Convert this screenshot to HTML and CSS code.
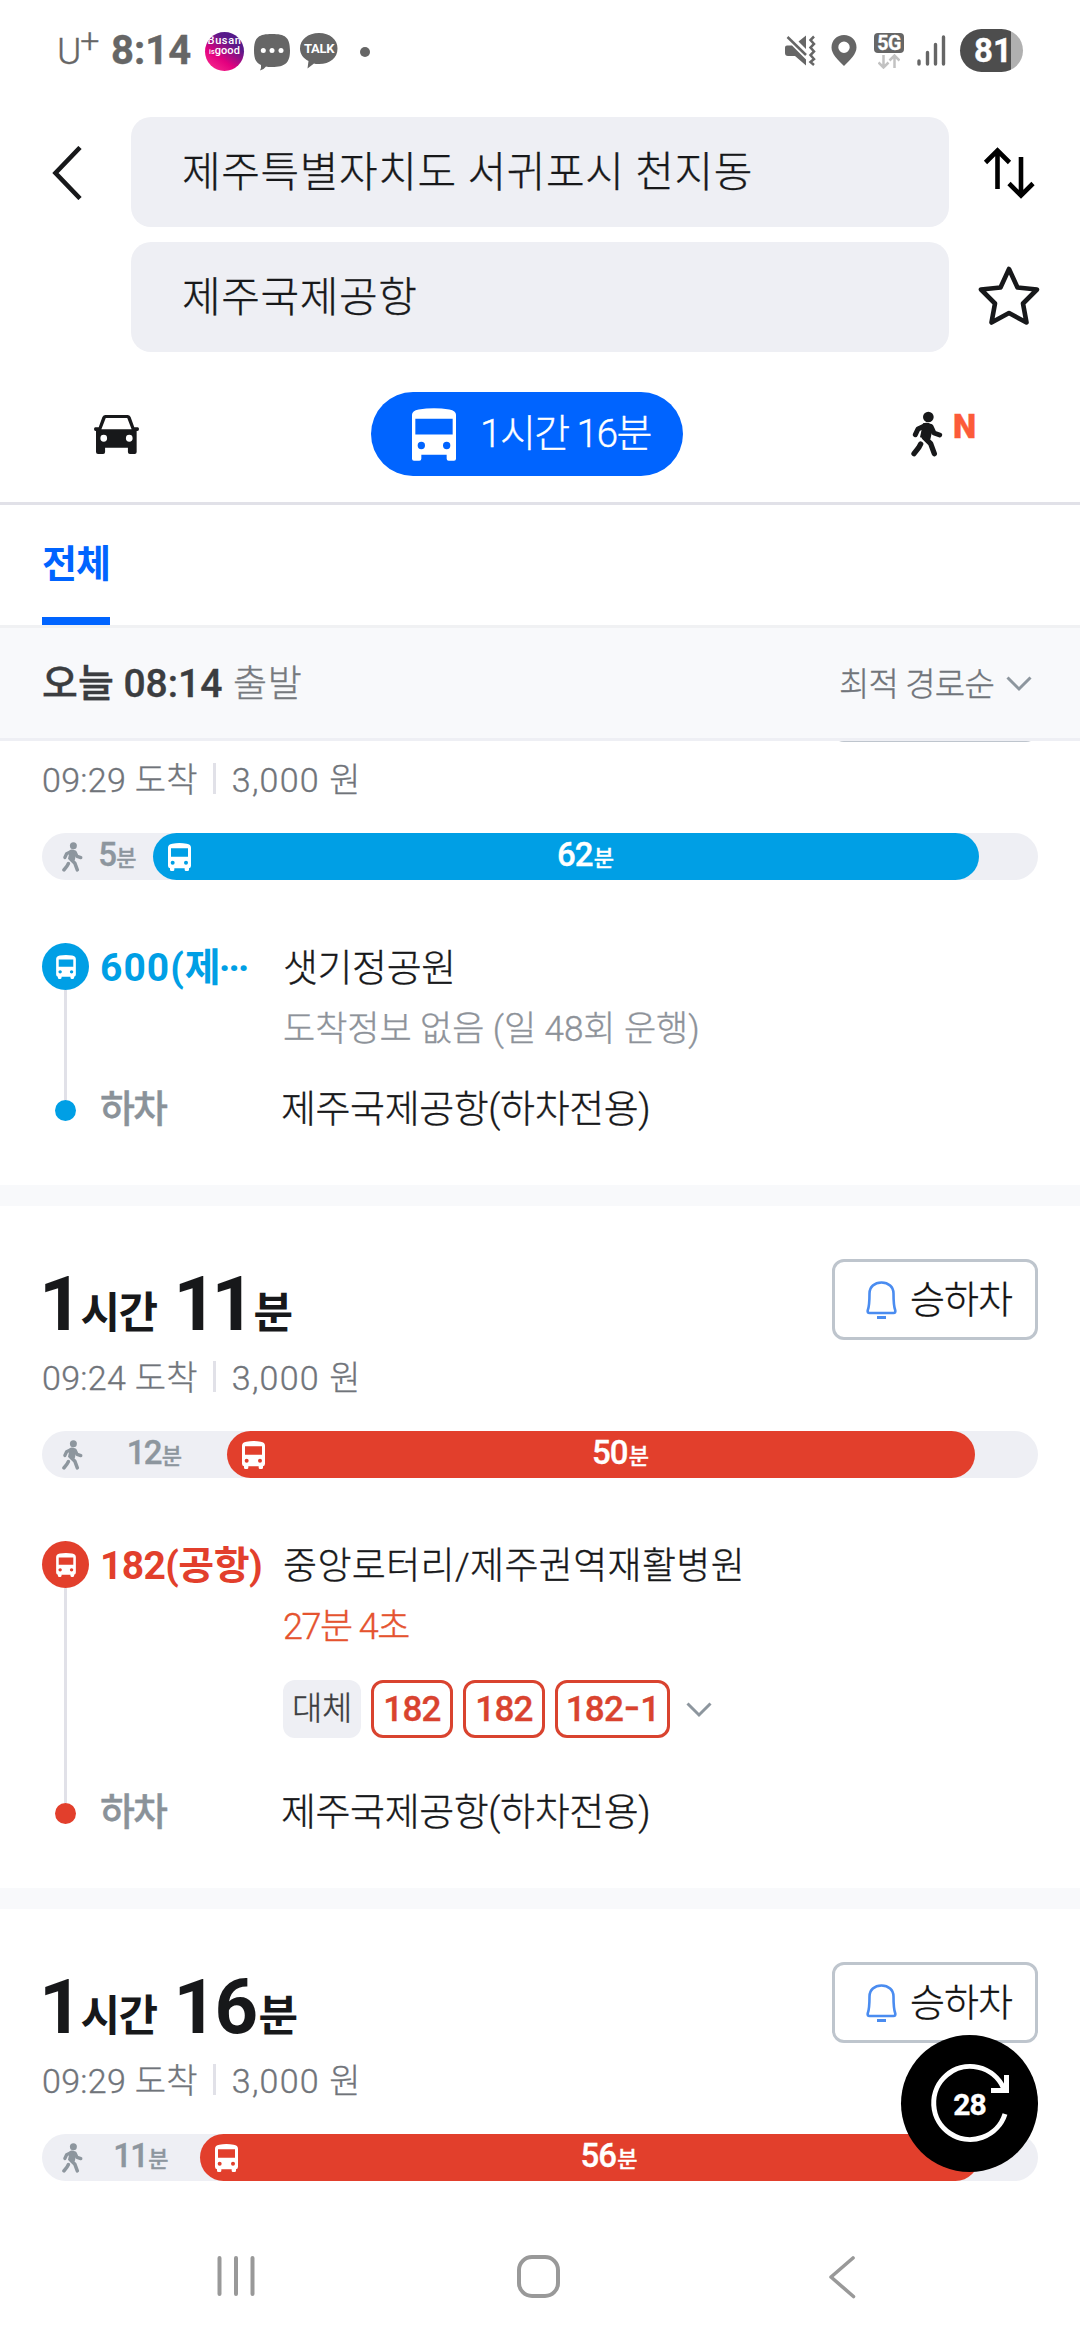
FILE: index.html
```html
<!DOCTYPE html>
<html lang="ko">
<head>
<meta charset="utf-8">
<title>길찾기</title>
<link rel="stylesheet" href="styles.css">
</head>
<body>
<svg class="defs" width="0" height="0">
  <symbol id="walk" viewBox="0 0 96 136">
    <circle cx="52" cy="17" r="16"/>
    <path d="M36 36Q48 31 60 38Q67 43 65 54L58 84L27 78Z"/>
    <path d="M42 43L21 53L13 70M60 46L69 65L86 71" fill="none" stroke="currentColor" stroke-width="15" stroke-linecap="round" stroke-linejoin="round"/>
    <path d="M40 78L59 97L70 127M29 98L23 109L9 127" fill="none" stroke="currentColor" stroke-width="16" stroke-linecap="round" stroke-linejoin="round"/>
  </symbol>
  <symbol id="bus" viewBox="0 0 69 84">
    <path fill-rule="evenodd" d="M0 14Q0 4 13 2Q34 -2 56 2Q69 4 69 14V68Q69 75 63 76V80Q63 84 59 84H54Q50 84 50 80V76H19V80Q19 84 15 84H10Q6 84 6 80V76Q0 75 0 68ZM9 16V41H60V16ZM8 59a6 6 0 1 0 12 0a6 6 0 1 0-12 0M48 59a6 6 0 1 0 12 0a6 6 0 1 0-12 0"/>
  </symbol>
  <symbol id="bell" viewBox="0 0 31 38">
    <path d="M15.500 1.500C8.500 1.500 3.500 6 3.500 12.500C3.500 21 3.500 25 1.700 29.500Q1.300 32 3.500 32H27.500Q29.700 32 29.300 29.500C27.500 25 27.500 21 27.500 12.500C27.500 6 22.500 1.500 15.500 1.500Z" fill="none" stroke="currentColor" stroke-width="2.600"/>
    <path d="M11 35h9v3h-9z"/>
  </symbol>
</svg>

<div class="phone">
  <header class="status">
    <span class="carrier">U<span class="plus">+</span></span>
    <span class="clock">8:14</span>
    <span class="busan"><span>Busan</span><span><small>is</small>good</span></span>
    <svg class="chat" width="36" height="38" viewBox="0 0 36 38" fill="#666"><path d="M18 1C31 1 36 4 36 17.500C36 30 31 34 18 34C15 34 13.500 34 12 33.500Q10 36.500 6 37.500Q7.500 35 7 32C1.500 29.500 0 25 0 17.500C0 4 5 1 18 1Z"/><g fill="#fff"><circle cx="9.300" cy="17.500" r="2.500"/><circle cx="18" cy="17.500" r="2.500"/><circle cx="27" cy="17.500" r="2.500"/></g></svg>
    <span class="talk"><svg width="38" height="36" viewBox="0 0 38 36" fill="#666"><path d="M19 0C30 0 37.500 6.500 37.500 15.500C37.500 25 30 31 19 31Q15 31 14 30.500L7.500 35.500L8.500 28C3.500 25.500 0 21 0 15.500C0 6.500 8 0 19 0Z"/></svg><span class="talk-text">TALK</span></span>
    <span class="more"></span>
    <span class="status-right">
      <svg class="mute" width="31" height="31" viewBox="0 0 31 31" fill="#666"><path d="M0 12.500Q0 10.500 2 10.500H7L21 24.500V30.500L10 21H3Q0 21 0 18ZM13.500 6.500L21 .500V14Z"/><path d="M2.500 2L21 20" stroke="#666" stroke-width="2.500"/><path class="wave" d="M29 1.500L25.500 5L29 9L25.500 12.500L29 16.500L25.500 20L29 24L25.500 27L29 30" fill="none" stroke="#666" stroke-width="2.500"/></svg>
      <svg class="pin" width="26" height="31" viewBox="0 0 26 31" fill="#666"><path fill-rule="evenodd" d="M13 0C20 0 25.500 5 25.500 12.500C25.500 19 19 25 13 31C7 25 .500 19 .500 12.500C.500 5 6 0 13 0ZM13 6.500a5.700 5.700 0 1 0 0 11.400a5.700 5.700 0 1 0 0-11.400"/></svg>
      <span class="net"><span class="net-tag">5G</span><svg width="22" height="15" viewBox="0 0 22 15" fill="none" stroke="#c2c2c2" stroke-width="2.500"><path d="M5.500 1V13M.500 8.500L5.500 13.500L10.500 8.500M16.500 14V2M11.500 6.500L16.500 1.500L21.500 6.500"/></svg></span>
      <svg class="signal" width="29" height="31" viewBox="0 0 29 31" stroke="#666" stroke-width="3.400" stroke-linecap="round"><path d="M2 26V29M10.500 17.500V29M18.500 9.500V29M26.500 2V29"/></svg>
      <span class="battery">81</span>
    </span>
  </header>

  <section class="search">
    <svg class="back" width="32" height="54" viewBox="0 0 32 54" fill="none" stroke="#17181a" stroke-width="4.600"><path d="M28 1.500L3.500 27L28 52.500"/></svg>
    <div class="field">제주특별자치도 서귀포시 천지동</div>
    <svg class="side" width="52" height="52" viewBox="0 0 52 52" fill="none" stroke="#000" stroke-width="4.600"><path d="M14.500 42V4M2.500 15.500L14.500 3.500L26.500 15.500M38 10V48M26 36.500L38 48.500L50 36.500"/></svg>
    <span></span>
    <div class="field">제주국제공항</div>
    <svg class="side star" width="62" height="64" viewBox="0 0 62 64" fill="none" stroke="#17181a" stroke-width="4.600" stroke-linejoin="round"><path d="M31 5L39.500 23.500L59 25.500L45 39.500L48.500 58.500L31 49L13.500 58.500L17 39.500L3 25.500L22.500 23.500Z"/></svg>
  </section>

  <nav class="modes">
    <svg width="45" height="39" viewBox="0 0 134 114" preserveAspectRatio="none" fill="#17181a"><path fill-rule="evenodd" d="M34 0H100Q106 0 109 6L120 36H130Q134 36 134 41Q134 47 129 47H127V108Q127 114 121 114H107Q101 114 101 108V96H33V108Q33 114 27 114H12Q6 114 6 108V47H5Q0 47 0 41Q0 36 4 36H14L25 6Q28 0 34 0ZM35 9L22 42H112L99 9ZM19 68a10 10 0 1 0 20 0a10 10 0 1 0-20 0M95 68a10 10 0 1 0 20 0a10 10 0 1 0-20 0"/></svg>
    <div class="pill">
      <svg width="44" height="53" viewBox="0 0 132 158" fill="#fff"><path fill-rule="evenodd" d="M0 20Q0 8 20 4Q66-4 112 4Q132 8 132 20V152Q132 158 126 158H110Q104 158 104 152V140H28V152Q28 158 22 158H6Q0 158 0 152ZM10 32V79H122V32ZM17 112a11 11 0 1 0 22 0a11 11 0 1 0-22 0M93 112a11 11 0 1 0 22 0a11 11 0 1 0-22 0"/></svg>
      <span>1시간 16분</span>
    </div>
    <div class="on-foot"><svg width="32" height="46"><use href="#walk"/></svg><span>N</span></div>
  </nav>

  <div class="tabs"><span class="tab">전체</span></div>

  <div class="depart">
    <span class="when">오늘 08:14 <span>출발</span></span>
    <span class="sort">최적 경로순<svg width="26" height="16" viewBox="0 0 26 16" fill="none" stroke="#8d969e" stroke-width="3"><path d="M1.500 1.500L13 13L24.500 1.500"/></svg></span>
  </div>

  <main class="list">
    <article class="card first blue">
      <div class="head"><span></span><span class="alarm"></span></div>
      <div class="meta"><span>09:29 도착</span><i></i><span class="fare">3,000 원</span></div>
      <div class="bar">
        <div class="foot" style="width:111px"><svg width="21" height="30"><use href="#walk"/></svg><span>5<small>분</small></span></div>
        <div class="ride" style="width:826px"><svg width="23" height="28"><use href="#bus"/></svg><span>62<small>분</small></span></div>
      </div>
      <div class="leg">
        <div class="rail"><span class="disc"><svg width="20" height="24"><use href="#bus"/></svg></span><span class="line"></span><span class="dot"></span></div>
        <div class="stops">
          <div class="row on"><b class="route wide">600(제<span class="dots">···</span></b><span>샛기정공원</span></div>
          <div class="arrive none">도착정보 없음 (일 48회 운행)</div>
          <div class="row off"><b>하차</b><span>제주국제공항(하차전용)</span></div>
        </div>
      </div>
    </article>

    <article class="card red">
      <div class="head">
        <h2><span>1</span><small>시간</small><span class="mins ones">11</span><small>분</small></h2>
        <span class="alarm"><svg width="31" height="38"><use href="#bell"/></svg>승하차</span>
      </div>
      <div class="meta"><span>09:24 도착</span><i></i><span class="fare">3,000 원</span></div>
      <div class="bar">
        <div class="foot" style="width:185px"><svg width="21" height="30"><use href="#walk"/></svg><span>12<small>분</small></span></div>
        <div class="ride" style="width:748px"><svg width="23" height="28"><use href="#bus"/></svg><span>50<small>분</small></span></div>
      </div>
      <div class="leg">
        <div class="rail"><span class="disc"><svg width="20" height="24"><use href="#bus"/></svg></span><span class="line"></span><span class="dot"></span></div>
        <div class="stops">
          <div class="row on"><b class="route">182(공항)</b><span class="wide-stop">중앙로터리/제주권역재활병원</span></div>
          <div class="arrive">27분 4초</div>
          <div class="chips"><span class="alt">대체</span><span class="chip">182</span><span class="chip">182</span><span class="chip long">182<em>-</em>1</span><svg width="26" height="16" viewBox="0 0 26 16" fill="none" stroke="#8d969e" stroke-width="3"><path d="M1.500 1.500L13 13L24.500 1.500"/></svg></div>
          <div class="row off"><b>하차</b><span>제주국제공항(하차전용)</span></div>
        </div>
      </div>
    </article>

    <article class="card red">
      <div class="head">
        <h2><span>1</span><small>시간</small><span class="mins">16</span><small>분</small></h2>
        <span class="alarm"><svg width="31" height="38"><use href="#bell"/></svg>승하차</span>
      </div>
      <div class="meta"><span>09:29 도착</span><i></i><span class="fare">3,000 원</span></div>
      <div class="bar">
        <div class="foot" style="width:158px"><svg width="21" height="30"><use href="#walk"/></svg><span>11<small>분</small></span></div>
        <div class="ride" style="width:779px"><svg width="23" height="28"><use href="#bus"/></svg><span>56<small>분</small></span></div>
      </div>
    </article>
  </main>

  <div class="refresh">
    <svg width="137" height="137" viewBox="0 0 137 137" fill="none" stroke="#fff" stroke-width="5"><path d="M104 79A36.500 36.500 0 1 1 102.500 53M105.500 40V55.500H90"/></svg>
    <span>28</span>
  </div>

  <footer class="navbar">
    <svg width="39" height="42" viewBox="0 0 39 42" stroke="#999" stroke-width="4" stroke-linecap="round"><path d="M2.500 3V39M19 3V39M35.500 3V39"/></svg>
    <svg width="43" height="43" viewBox="0 0 43 43" fill="none" stroke="#999" stroke-width="4"><rect x="2" y="2" width="39" height="39" rx="13"/></svg>
    <svg width="28" height="44" viewBox="0 0 28 44" fill="none" stroke="#999" stroke-width="3.600" stroke-linecap="round" stroke-linejoin="round"><path d="M25 3L3 22L25.500 41.500"/></svg>
  </footer>
</div>
</body>
</html>
```

FILE: styles.css
```css
* { box-sizing: border-box; }
body { margin: 0; background: #fff; font-family: Roboto, "Noto Sans CJK KR", sans-serif; font-weight: 300; color: #17181a; line-height: 1; -webkit-text-stroke: .35px currentColor; }
svg { display: block; flex: none; fill: currentColor; }
svg[fill="none"] { fill: none; }
.defs { position: absolute; }
small, em, b, h2, i { font: inherit; font-style: normal; margin: 0; }
.phone { position: relative; width: 1080px; height: 2340px; overflow: hidden; display: flex; flex-direction: column; white-space: nowrap; }

/* status bar */
.status { height: 101px; margin-bottom: 16px; padding: 0 57px 0 57px; display: flex; align-items: center; color: #666; flex: none; }
.status svg:not([fill="none"]) { fill: #666; }
.carrier { width: 54px; font-size: 37px; line-height: 44px; padding-top: 3px; display: flex; }
.plus { font-size: 34px; line-height: 20px; margin-left: -1px; }
.clock { font-size: 40px; font-weight: 700; width: 94px; line-height: 40px; }
.busan { width: 39px; height: 39px; border-radius: 50%; background: linear-gradient(35deg, #f5268c 10%, #e3007f 35%, #5b1a8a 70%, #4a1a8c); color: #fff; overflow: hidden; display: flex; flex-direction: column; align-items: center; font-size: 11px; line-height: 10px; font-weight: 500; padding-top: 4px; margin-top: 2px; -webkit-text-stroke: 0; }
.busan span { letter-spacing: .6px; }
.busan span + span { letter-spacing: .1px; }
.busan small { font-size: 7px; }
.chat { margin: 2px 0 0 10px; }
.talk { position: relative; margin-left: 10px; }
.talk-text { position: absolute; inset: 10px 0 auto; text-align: center; font-size: 13px; line-height: 12px; font-weight: 700; color: #fff; letter-spacing: -.3px; -webkit-text-stroke: 0; }
.more { width: 10px; height: 10px; border-radius: 50%; background: #666; margin: 3px 0 0 22px; }
.status-right { margin-left: auto; display: flex; align-items: center; }
.pin { margin-left: 15px; }
.net { margin-left: 17px; display: flex; flex-direction: column; align-items: center; gap: 1px; }
.net-tag { width: 30px; height: 20px; border-radius: 4px; background: #666; color: #fff; font-size: 19.5px; line-height: 21px; font-weight: 700; text-align: center; letter-spacing: -.5px; }
.signal { margin-left: 13px; }
.battery { margin-left: 14px; width: 63px; height: 43px; border-radius: 22px; background: linear-gradient(90deg, #4d4d4d 51px, #b0b0b0 51px); color: #fff; font-size: 33px; font-weight: 700; line-height: 43px; padding-left: 14px; }

/* origin / destination */
.search { display: grid; grid-template-columns: 131px 818px 131px; grid-template-rows: 110px 110px; row-gap: 15px; align-items: center; }
.back { margin: 2px 0 0 52px; }
.field { height: 110px; border-radius: 20px; background: #eeeff4; padding: 1px 0 0 51px; font-size: 42px; line-height: 110px; letter-spacing: .6px; }
.side { margin: 2px 0 0 34px; }
.star { margin: -2px 0 0 29px; }

/* travel modes */
.modes { display: grid; grid-template-columns: 277px 540px auto; align-items: center; padding: 40px 0 26px 94px; height: 153px; border-bottom: 3px solid #e1e1e8; flex: none; }
.pill { width: 312px; height: 84px; border-radius: 42px; background: #0064ff; color: #fff; display: flex; align-items: center; padding-left: 41px; gap: 24px; font-size: 39px; letter-spacing: -1.6px; }
.pill svg { fill: #fff; }
.on-foot { display: flex; align-items: flex-start; gap: 10px; }
.on-foot span { font-size: 33px; line-height: 32px; font-weight: 900; color: #fc5b39; }

.tabs { height: 123px; padding-left: 42px; border-bottom: 3px solid #f0f1f3; flex: none; }
.tab { display: block; width: 68px; height: 120px; border-bottom: 8px solid #0064ff; color: #0064ff; font-size: 38px; line-height: 118px; font-weight: 700; letter-spacing: -1px; -webkit-text-stroke: 0; }

.depart { height: 113px; padding: 2px 48px 0 42px; display: flex; align-items: center; justify-content: space-between; background: #f8f9fb; border-bottom: 3px solid #eeeff4; flex: none; }
.when { font-size: 39px; font-weight: 500; color: #3b3d40; }
.when span { font-size: 37px; font-weight: 300; color: #76797e; letter-spacing: .5px; margin-left: 1px; }
.sort { display: flex; align-items: center; gap: 12px; font-size: 33px; letter-spacing: -.8px; color: #70747a; }

/* routes */
.list { height: 1473px; overflow: hidden; flex: none; }
.card { padding: 53px 42px 52px; border-bottom: 21px solid #f8f9fb; }
.card.first { margin-top: -133px; }
.blue { --line: #009fe5; }
.red { --line: #e23f2c; }
.head { height: 81px; display: flex; justify-content: space-between; align-items: flex-start; }
.head h2 { display: flex; font-size: 76px; font-weight: 700; line-height: 90px; margin-left: -3px; -webkit-text-stroke: 0; }
.head h2 small { font-size: 43px; line-height: 109px; letter-spacing: -1.6px; margin-left: -2px; }
.mins { margin: 0 5px 0 17px; letter-spacing: -2.6px; }
.ones { letter-spacing: -5.6px; margin-right: 6px; }
.alarm { width: 206px; height: 81px; border: 3px solid #bec5cd; border-radius: 12px; display: flex; align-items: center; gap: 13px; padding: 1px 0 0 31px; font-size: 38px; letter-spacing: -.9px; color: #111; }
.alarm svg { fill: #4a8cf0; color: #4a8cf0; }
.meta { height: 75px; margin-bottom: 16px; display: flex; align-items: center; font-size: 34px; color: #70747a; letter-spacing: .3px; }
.meta i { width: 3px; height: 31px; margin: -2px 16px 0 15px; background: #e1e1e8; }
.fare { letter-spacing: 1.2px; }
.bar { height: 47px; border-radius: 24px; background: #eeeff4; display: flex; }
.bar span { flex: 1; text-align: center; font-size: 33px; line-height: 49px; font-weight: 500; letter-spacing: -1px; }
.bar small { font-size: 22px; margin-left: 1px; }
.foot { display: flex; align-items: center; padding-left: 20px; color: #8d969e; }
.bar .foot span { letter-spacing: -1.8px; padding-right: 3px; }
.ride { display: flex; align-items: center; padding-left: 15px; border-radius: 24px; background: var(--line); color: #fff; }

.leg { display: flex; gap: 12px; margin-top: 63px; }
.rail { width: 47px; display: flex; flex-direction: column; align-items: center; padding-bottom: 12px; }
.disc { width: 47px; height: 47px; border-radius: 50%; background: var(--line); color: #fff; display: grid; place-items: center; }
.line { width: 3px; flex: 1; background: #e1e1e8; }
.dot { width: 21px; height: 21px; border-radius: 50%; background: var(--line); }
.row { display: grid; grid-template-columns: 181px auto; height: 47px; font-size: 38px; line-height: 47px; letter-spacing: -.4px; }
.row b { font-weight: 500; color: #8a9299; letter-spacing: -2px; margin-left: -1px; }
.row.off > span { margin-left: -1px; }
.row.on { line-height: 51px; }
.row .route { font-size: 39px; font-weight: 700; color: var(--line); letter-spacing: -.6px; -webkit-text-stroke: 0; }
.row .wide { letter-spacing: 1px; }
.route.wide .dots { letter-spacing: -2.2px; margin-left: -3px; }
.row.on > span { padding-left: 1px; }
.row .wide-stop { font-size: 37px; letter-spacing: .35px; }
.arrive { height: 72px; padding-left: 182px; font-size: 36px; line-height: 79px; letter-spacing: -1.5px; color: #e5532f; }
.arrive.none { margin-bottom: 24px; font-size: 35px; letter-spacing: -.05px; color: #8d9299; }
.chips { display: flex; align-items: center; height: 58px; margin: 20px 0 51px 182px; gap: 10px; font-size: 35px; }
.alt { width: 78px; height: 58px; border-radius: 12px; background: #eeeff4; color: #3b3d40; font-size: 33px; line-height: 57px; text-align: center; letter-spacing: -.4px; }
.chip { width: 82px; height: 58px; border: 3px solid #d9432f; border-radius: 12px; color: #d9432f; font-weight: 500; line-height: 53px; text-align: center; letter-spacing: -.8px; }
.chip.long { width: 115px; }
.chip em { display: inline-block; margin: 0 3px 0 3px; transform: translateY(-2px) scaleX(1.3); }
.chips svg { margin: 2px 0 0 6px; }

.refresh { position: absolute; left: 901px; top: 2035px; width: 137px; height: 137px; border-radius: 50%; background: #000; color: #fff; display: grid; place-items: center; }
.refresh > * { grid-area: 1 / 1; }
.refresh span { font-size: 30px; font-weight: 700; letter-spacing: -1px; padding-top: 2px; }

.navbar { flex: 1; display: grid; grid-template-columns: 300px 311px 1fr; padding: 41px 0 0 217px; }
```
